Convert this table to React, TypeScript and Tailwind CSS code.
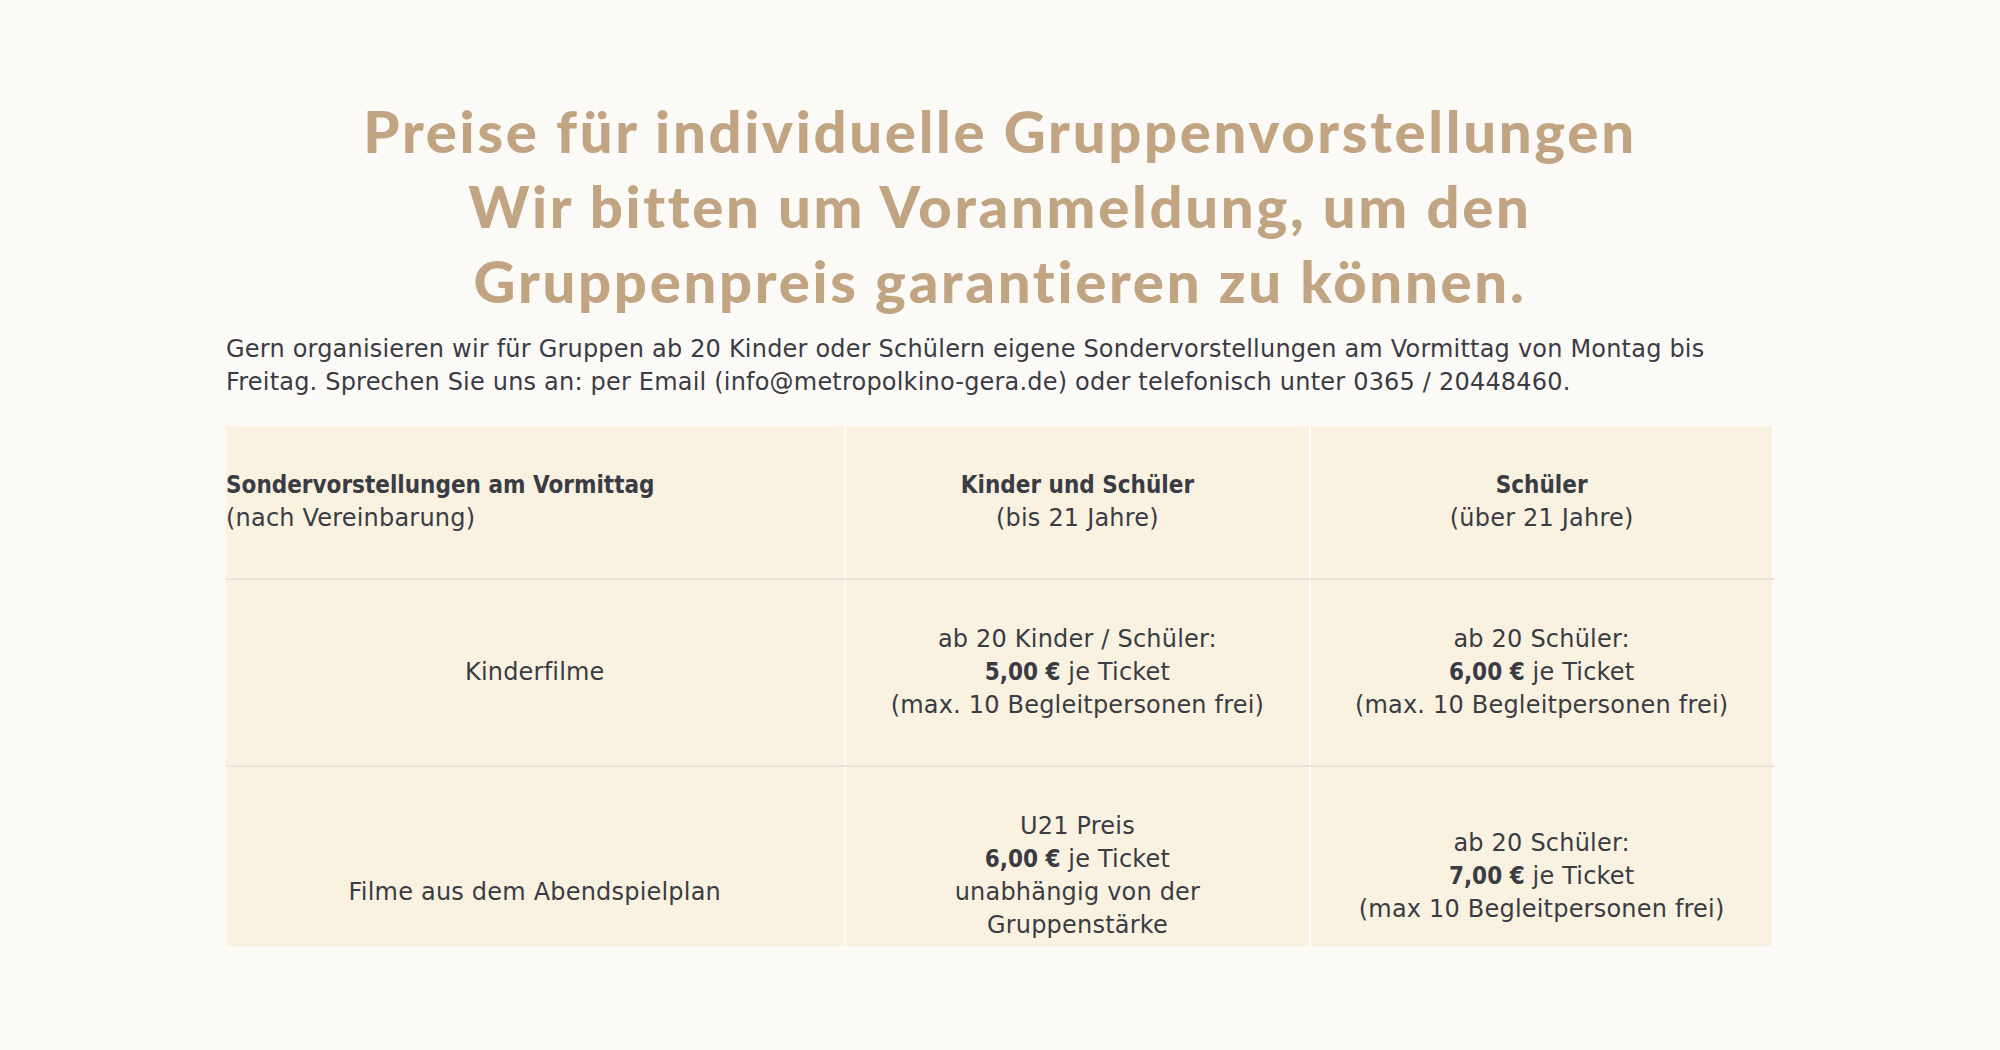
import React from "react";

const body = "font-['DejaVu_Sans',sans-serif]";
const bold = "font-['DejaVu_Sans_Condensed','DejaVu_Sans',sans-serif] font-bold [font-stretch:condensed] tracking-normal";

export default function App() {
  const cell = "bg-[#f9f2e1] align-middle py-[43px] border-b-2 border-b-[#e9e5dc] border-r-2 border-r-[#fefdf9]";
  return (
    <div className="min-h-[1050px] w-full bg-[#fbfaf7]">
      <div className="mx-auto w-[1548px] pt-[93px]">
        <h1 className="text-center font-['Lato',sans-serif] text-[58px] font-black leading-[75px] tracking-[2.7px] text-[#c1a482]">
          Preise für individuelle Gruppenvorstellungen
          <br />
          Wir bitten um Voranmeldung, um den
          <br />
          Gruppenpreis garantieren zu können.
        </h1>
        <p className={`${body} mt-[15px] text-[24px] leading-[33px] tracking-[0.2px] text-[#3b3b44]`}>
          Gern organisieren wir für Gruppen ab 20 Kinder oder Schülern eigene Sondervorstellungen am Vormittag von Montag bis Freitag. Sprechen Sie uns an: per Email (info@metropolkino-gera.de) oder telefonisch unter 0365 / 20448460.
        </p>
        <div className={`${body} mt-[27px] h-[520px] overflow-hidden text-[24px] leading-[33px] tracking-[0.2px] text-[#3b3b44]`}>
          <table className="w-full border-collapse">
            <colgroup>
              <col className="w-[619px]" />
              <col className="w-[466px]" />
              <col className="w-[463px]" />
            </colgroup>
            <tbody>
              <tr>
                <td className={`${cell} text-left`}>
                  <strong className={bold}>Sondervorstellungen am Vormittag</strong>
                  <br />
                  (nach Vereinbarung)
                </td>
                <td className={`${cell} text-center`}>
                  <strong className={bold}>Kinder und Schüler</strong>
                  <br />
                  (bis 21 Jahre)
                </td>
                <td className={`${cell} border-r-0 text-center`}>
                  <strong className={bold}>Schüler</strong>
                  <br />
                  (über 21 Jahre)
                </td>
              </tr>
              <tr>
                <td className={`${cell} text-center`}>Kinderfilme</td>
                <td className={`${cell} text-center`}>
                  ab 20 Kinder / Schüler:
                  <br />
                  <strong className={bold}>5,00 €</strong> je Ticket
                  <br />
                  (max. 10 Begleitpersonen frei)
                </td>
                <td className={`${cell} border-r-0 text-center`}>
                  ab 20 Schüler:
                  <br />
                  <strong className={bold}>6,00 €</strong> je Ticket
                  <br />
                  (max. 10 Begleitpersonen frei)
                </td>
              </tr>
              <tr>
                <td className={`${cell} border-b-0 text-center`}>
                  &nbsp;
                  <br />
                  Filme aus dem Abendspielplan
                </td>
                <td className={`${cell} border-b-0 text-center`}>
                  U21 Preis
                  <br />
                  <strong className={bold}>6,00 €</strong> je Ticket
                  <br />
                  unabhängig von der
                  <br />
                  Gruppenstärke
                </td>
                <td className={`${cell} border-b-0 border-r-0 text-center`}>
                  ab 20 Schüler:
                  <br />
                  <strong className={bold}>7,00 €</strong> je Ticket
                  <br />
                  (max 10 Begleitpersonen frei)
                </td>
              </tr>
            </tbody>
          </table>
        </div>
      </div>
    </div>
  );
}
